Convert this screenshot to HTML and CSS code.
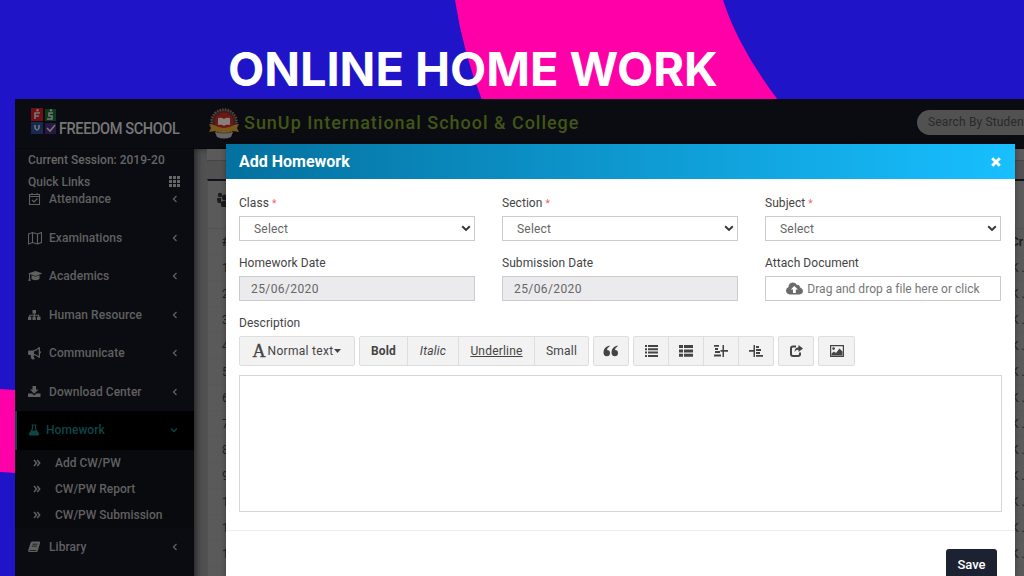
FILE: index.html
```html
<!DOCTYPE html>
<html lang="en">
<head>
<meta charset="utf-8">
<title>Online Home Work</title>
<link rel="stylesheet" href="styles.css">
</head>
<body>
<svg class="backdrop" viewBox="0 0 1024 576"><path fill="#ff00a8" d="M455 0Q463 52 482 100H778C751 64 733 31 723 0ZM0 389l16 1v83l-16-1z"/></svg>
<h1 class="title">ONLINE HOME WORK</h1>
<div class="window">
  <header class="topbar">
    <div class="brand">
      <svg class="brand-mark" viewBox="0 0 26 27"><path fill="#701015" d="M0 0h12v13H0z"/><path fill="#0c3a1b" d="M14 1h11v12H14z"/><path fill="#172b50" d="M0 14h12v12H0z"/><path fill="#2a1744" d="M14 15h11v11H14z"/><g fill="none" stroke="#777" stroke-width="1.6"><path d="M4 11V5h5M4 8h4M22 5h-4v3h3v3h-5M4 17v3q2 4 4 0v-3M16 20l3 3 5-6"/></g><circle cx="6.500" cy="2.300" r="1.200" fill="#777"/><circle cx="20" cy="2.300" r="1.200" fill="#777"/></svg>
      <span class="brand-name">FREEDOM SCHOOL</span>
    </div>
    <svg class="crest" viewBox="0 0 32 32"><circle cx="16" cy="14" r="12.500" fill="#2d2323" stroke="#63413f" stroke-width="2.500" stroke-dasharray="1.500 1.200"/><circle cx="16" cy="14" r="9.500" fill="#701716"/><path fill="#858078" d="M10 10q4-1 6 1 2-2 6-1v7q-4-1-6 1-2-2-6-1z"/><path fill="#79591b" d="M1 16l5 1q10 6 20 0l5-1-2 4 2 4-6-1q-9 4-18 0l-6 1 2-4z"/><path fill="#676767" d="M7 24q9 3 18 0l-2 5q-7 3-14 0z"/></svg>
    <span class="school">SunUp International School &amp; College</span>
    <div class="search">Search By Student</div>
  </header>
  <div class="main">
    <nav class="sidebar">
      <div class="session">Current Session: 2019-20</div>
      <div class="quick"><span>Quick Links</span><svg width="11" height="11" viewBox="0 0 11 11"><path fill="#666" d="M0 0h3v3H0zM4 0h3v3H4zM8 0h3v3H8zM0 4h3v3H0zM4 4h3v3H4zM8 4h3v3H8zM0 8h3v3H0zM4 8h3v3H4zM8 8h3v3H8z"/></svg></div>
      <div class="menu">
        <div class="item"><svg class="ico" viewBox="0 0 14 14"><path class="ln" d="M1.500 2.500h10v10h-10zM1.500 4.500h10M4 1v2M9 1v2M4 8l2 2 3.500-3.500"/></svg><span>Attendance</span><svg class="arr" viewBox="0 0 6 8"><path d="M4.500 1L1.500 4l3 3"/></svg></div>
        <div class="item"><svg class="ico" viewBox="0 0 14 14"><path class="ln" d="M.5 3l4-1.500 5 1.500 4-1.500v10L9.500 13l-5-1.500-4 1.500zM4.500 1.500v10M9.500 3v10"/></svg><span>Examinations</span><svg class="arr" viewBox="0 0 6 8"><path d="M4.500 1L1.500 4l3 3"/></svg></div>
        <div class="item"><svg class="ico" viewBox="0 0 14 14"><path d="M7.500 2l7.500 2.500L7.500 7 0 4.500zM3.500 6.300l4 1.300 4-1.300V10q-4 2.500-8 0zM1 5h1v4l.7 3H.3L1 9z"/></svg><span>Academics</span><svg class="arr" viewBox="0 0 6 8"><path d="M4.500 1L1.500 4l3 3"/></svg></div>
        <div class="item"><svg class="ico" viewBox="0 0 14 14"><path d="M4.500 2h3.500v3.500H6.800v1.200h4.400v2H12.500V12H9V8.700h1V7.800H6.800v.9h1V12H4.500V8.700h1.200v-.9H2.300v.9h1V12H0V8.700h1.200v-2h4.500V5.500H4.500z"/></svg><span>Human Resource</span><svg class="arr" viewBox="0 0 6 8"><path d="M4.500 1L1.500 4l3 3"/></svg></div>
        <div class="item"><svg class="ico" viewBox="0 0 14 14"><path fill-rule="evenodd" d="M11 1q1 0 1 1v3q1 .2 1 1.200T12 7.500V11q0 1-1 1-2.500-2.500-5-2.800-1 .8 0 2-.2.8 1 1.500-1.500 1.200-3.500.3Q2.500 10.500 2.800 9H1.500Q0 9 0 8V5.500q0-1 1.500-1H5Q8.500 4 11 1zm-.3 1.800Q8.500 5 6 5.400v2.500q2.500.4 4.700 2.300z"/></svg><span>Communicate</span><svg class="arr" viewBox="0 0 6 8"><path d="M4.500 1L1.500 4l3 3"/></svg></div>
        <div class="item"><svg class="ico" viewBox="0 0 14 14"><path d="M4.500 1h3.500v3.500h2.500L6.200 8.800 2 4.500h2.500zM0 8.500h4l2.200 2 2.300-2h4V12H0z"/></svg><span>Download Center</span><svg class="arr" viewBox="0 0 6 8"><path d="M4.500 1L1.500 4l3 3"/></svg></div>
        <div class="item active"><svg class="ico" viewBox="0 0 14 14"><path fill-rule="evenodd" d="M3.500 1.500h5v1H8v3l3 5q.8 2-1 2H2q-1.800 0-1-2l3-5v-3h-.5zM5 2.500v3.200L4 7.500h4L7 5.700V2.500z"/></svg><span>Homework</span><svg class="arr down" viewBox="0 0 8 6"><path d="M1 1.500l3 3 3-3"/></svg></div>
        <div class="sub"><svg viewBox="0 0 8 8"><path d="M1 1l2.500 3L1 7M4.200 1l2.500 3-2.500 3"/></svg><span>Add CW/PW</span></div>
        <div class="sub"><svg viewBox="0 0 8 8"><path d="M1 1l2.500 3L1 7M4.200 1l2.500 3-2.500 3"/></svg><span>CW/PW Report</span></div>
        <div class="sub"><svg viewBox="0 0 8 8"><path d="M1 1l2.500 3L1 7M4.200 1l2.500 3-2.500 3"/></svg><span>CW/PW Submission</span></div>
        <div class="item"><svg class="ico" viewBox="0 0 14 14"><path fill-rule="evenodd" d="M4 1.500h7.500l.7 1-2.400 8.300q-.3 1.200-1.500 1.200H1.500Q-.3 12 .3 10L2.500 3Q3 1.500 4 1.500zm.6 2.200l-.2.700h5l.2-.7zM4 5.700l-.2.700h5l.2-.7zM1.700 9.900q-.3.800.3.800h6l.3-.8z"/></svg><span>Library</span><svg class="arr" viewBox="0 0 6 8"><path d="M4.500 1L1.500 4l3 3"/></svg></div>
      </div>
    </nav>
    <section class="content">
      <div class="strip"></div>
      <div class="panel">
        <div class="panel-head"><svg width="18" height="18" viewBox="0 0 18 18"><circle cx="3" cy="4" r="2.200"/><circle cx="8" cy="6.500" r="3"/><circle cx="14" cy="4" r="2.200"/><path d="M0 7h4v5H1q-1-2-1-5zM3.500 11q4.500-2 9 0v5h-8zM13 7h4v5h-3z"/></svg></div>
        <div class="row head"><span>#</span><span>Cr</span></div>
        <div class="row"><span>1</span><span>K .</span></div>
        <div class="row"><span>2</span><span>K .</span></div>
        <div class="row"><span>3</span><span>K .</span></div>
        <div class="row"><span>4</span><span>K .</span></div>
        <div class="row"><span>5</span><span>K .</span></div>
        <div class="row"><span>6</span><span>K .</span></div>
        <div class="row"><span>7</span><span>K .</span></div>
        <div class="row"><span>8</span><span>K .</span></div>
        <div class="row"><span>9</span><span>K .</span></div>
        <div class="row"><span>1</span><span>K .</span></div>
        <div class="row"><span>1</span><span>K .</span></div>
        <div class="row"><span>1</span><span>K .</span></div>
      </div>
    </section>
  </div>
</div>
<div class="modal">
  <div class="modal-head"><span>Add Homework</span><svg width="10" height="10" viewBox="0 0 10 10"><path d="M1.200 1.200l7.600 7.600M8.800 1.200L1.200 8.800" stroke="#fff" stroke-width="2.900"/></svg></div>
  <div class="form">
    <div class="field"><label>Class <i>*</i></label><div class="box select"><span>Select</span><svg width="10" height="7" viewBox="0 0 10 7"><path d="M1.200 1.300L5 5l3.800-3.700"/></svg></div></div>
    <div class="field"><label>Section <i>*</i></label><div class="box select"><span>Select</span><svg width="10" height="7" viewBox="0 0 10 7"><path d="M1.200 1.300L5 5l3.800-3.700"/></svg></div></div>
    <div class="field"><label>Subject <i>*</i></label><div class="box select"><span>Select</span><svg width="10" height="7" viewBox="0 0 10 7"><path d="M1.200 1.300L5 5l3.800-3.700"/></svg></div></div>
    <div class="field"><label>Homework Date</label><div class="box date">25/06/2020</div></div>
    <div class="field"><label>Submission Date</label><div class="box date">25/06/2020</div></div>
    <div class="field"><label>Attach Document</label><div class="box drop"><svg width="17" height="13" viewBox="0 0 17 13"><path fill="#6b6b6b" fill-rule="evenodd" d="M4 12.500Q0 12 0 8.500 0 6 2.500 5 2.500 1 6.500.5 10 .3 11 3q2.500-.8 3.200 2.500Q17 6.500 17 9t-3.500 3.500zM8.300 4L4.800 7.500H7V11h2.800V7.500H12z"/></svg><span>Drag and drop a file here or click</span></div></div>
  </div>
  <div class="desc-label">Description</div>
  <div class="toolbar">
    <div class="group"><div class="btn normal"><b>A</b><span>Normal text</span><svg width="7" height="4" viewBox="0 0 7 4"><path fill="#444" d="M0 0h7L3.500 4z"/></svg></div></div>
    <div class="group"><div class="btn bold">Bold</div><div class="btn italic">Italic</div><div class="btn under">Underline</div><div class="btn small">Small</div></div>
    <div class="group"><div class="btn icon"><svg width="16" height="12" viewBox="0 0 16 12"><path d="M6.500.5v1Q4 2.500 4 5q3 0 3 3 0 3.200-3.300 3.200Q.5 11.200.5 7.500.5 2 6.500.5zM14.500.5v1Q12 2.500 12 5q3 0 3 3 0 3.200-3.300 3.200-3.200 0-3.200-3.700Q8.500 2 14.500.5z"/></svg></div></div>
    <div class="group"><div class="btn icon"><svg width="14" height="12" viewBox="0 0 14 12"><path d="M1 0h2v2H1zM4 0h10v2H4zM1 3.300h2v2H1zM4 3.300h10v2H4zM1 6.600h2v2H1zM4 6.600h10v2H4zM1 9.900h2v2H1zM4 9.900h10v2H4z"/></svg></div><div class="btn icon"><svg width="14" height="12" viewBox="0 0 14 12"><path d="M0 0h4v3H0zM5 0h9v3H5zM0 4.400h4v3H0zM5 4.400h9v3H5zM0 8.800h4v3H0zM5 8.800h9v3H5z"/></svg></div><div class="btn icon"><svg width="14" height="12" viewBox="0 0 14 12"><path d="M0 0h5v1.800H0zM1 3h3v2H1zM1 6h5v2H1zM0 9.500h7v2H0zM8.500 0H10v12H8.500zM6.500 5h2v1.700h-2zM10 5h4v1.700h-4z"/></svg></div><div class="btn icon"><svg width="14" height="12" viewBox="0 0 14 12"><path d="M4.500 0H6v12H4.500zM0 5h4.500v1.700H0zM7 1h3v1.900H7zM7 4h5v1.900H7zM7 7h4v1.900H7zM7 10h7v1.800H7z"/></svg></div></div>
    <div class="group"><div class="btn icon"><svg width="13" height="12" viewBox="0 0 13 12"><path fill="none" stroke="#444" stroke-width="2" d="M6 1.500H3Q1 1.500 1 3.500V9q0 2 2 2h5q2 0 2-2V7.500"/><path d="M8.500 0L13 3.500 8.500 7V4.800Q6 4.500 4.500 7 4.800 2.500 8.500 2.200z"/></svg></div></div>
    <div class="group"><div class="btn icon last"><svg width="14" height="12" viewBox="0 0 14 12"><path fill="none" stroke="#444" stroke-width="1.200" d="M.6.6h12.800v10.800H.6z"/><circle cx="3.600" cy="3.600" r="1.300"/><path d="M1.500 10.500V8.500L4 6.500l2 1.500 3.500-4.500 3 3v4z"/></svg></div></div>
  </div>
  <div class="textarea"></div>
  <div class="modal-foot"><div class="save">Save</div></div>
</div>
</body>
</html>
```
FILE: styles.css
```css
* { box-sizing: border-box; }
body { margin: 0; width: 1024px; height: 576px; overflow: hidden; position: relative; background: #1f14c8; font-family: Roboto, "Liberation Sans", sans-serif; font-size: 12px; letter-spacing: 0; color: #444; }
svg { display: block; flex: none; }
.backdrop { position: absolute; inset: 0; width: 1024px; height: 576px; }
.title { position: relative; margin: 0; height: 99px; padding: 39px 0 0 228px; font: 700 47px/60px Inter, sans-serif; letter-spacing: -.05px; color: #fff; white-space: nowrap; }
.window { position: relative; margin-left: 15px; height: 477px; display: flex; flex-direction: column; overflow: hidden; background: #0b0c11; }
.topbar { flex: none; height: 50px; display: flex; align-items: center; background: #0b0c11; border-bottom: 1px solid #07080b; }
.brand { display: flex; width: 193px; padding-left: 16px; align-items: flex-start; }
.brand-mark { width: 26px; height: 27px; }
.brand-name { font-size: 16px; line-height: 20px; padding-top: 11px; margin-left: 2px; color: #777; font-weight: 500; white-space: nowrap; transform: scaleX(.91); transform-origin: 0 0; letter-spacing: -.45px; }
.crest { width: 32px; height: 32px; }
.school { margin-left: 4px; flex: 1; font-size: 18px; font-weight: 500; letter-spacing: .98px; color: #425518; white-space: nowrap; position: relative; top: -1px; }
.search { flex: none; width: 130px; height: 25px; margin: -3px -23px 0 0; padding-left: 11px; border-radius: 13px; background: #515151; color: #292929; line-height: 25px; white-space: nowrap; letter-spacing: .15px; }
.main { flex: 1; display: flex; min-height: 0; }
.sidebar { flex: none; width: 179px; background: #0b0c11; color: #606060; font-weight: 500; }
.session { height: 22px; line-height: 22px; padding-left: 13px; color: #666; white-space: nowrap; }
.quick { height: 21px; padding: 0 14px 0 13px; display: flex; justify-content: space-between; align-items: center; color: #626262; }
.menu { margin-top: -12px; }
.item { height: 38.5px; display: flex; align-items: center; padding: 0 16px 0 13px; }
.item span { flex: 1; margin-left: 7px; white-space: nowrap; letter-spacing: .05px; }
.ico { width: 14px; height: 14px; fill: #606060; }
.ln { fill: none; stroke: #606060; stroke-width: 1.1; }
.arr { width: 6px; height: 8px; }
.arr path { fill: none; stroke: #606060; stroke-width: 1.3; }
.active { background: #000; color: #0f4547; border-left: 2px solid #0e4648; padding-left: 11px; }
.active span { margin-left: 4px; }
.active .ico { fill: #0f4547; }
.active .down { width: 8px; height: 6px; }
.active .arr path { stroke: #0f4547; }
.sub { height: 26px; display: flex; align-items: center; padding-left: 18px; background: #090a0e; }
.sub svg { width: 8px; height: 8px; fill: none; stroke: #606060; stroke-width: 1.5; }
.sub span { margin-left: 14px; }
.content { flex: 1; min-width: 0; padding-left: 13px; background: #515151; box-shadow: inset 6px 3px 7px -4px #222; }
.strip { height: 12px; background: #5a5a5a; border-bottom: 1px solid #444; }
.panel { margin-top: 18px; height: 420px; background: #5a5a5a; border-top: 2px solid #111318; border-left: 1px solid #515151; }
.panel-head { height: 48px; padding: 10px 0 0 9px; border-bottom: 1px solid #515151; }
.panel-head svg { fill: #1b1b1b; }
.row { height: 26px; line-height: 26px; display: flex; padding-left: 14px; color: #222; border-bottom: 1px solid #585858; }
.row span:first-child { width: 789px; flex: none; }
.row span:last-child { white-space: nowrap; }
.head { font-weight: 700; }
.modal { position: absolute; left: 226px; top: 144px; width: 789px; height: 432px; background: #fff; overflow: hidden; box-shadow: 0 1px 5px rgba(0,0,0,.35); }
.modal-head { height: 35px; padding: 0 14px 0 13px; display: flex; justify-content: space-between; align-items: center; background: linear-gradient(90deg, #04719f, #18bfff); color: #fff; font-size: 16px; font-weight: 700; letter-spacing: 0; }
.form { padding: 14px 14px 0 13px; display: grid; grid-template-columns: repeat(3, 236px); column-gap: 27px; grid-auto-rows: 60px; }
.form label, .desc-label { display: block; height: 20px; line-height: 20px; margin-bottom: 3px; white-space: nowrap; letter-spacing: .05px; color: #444; }
label i { color: #f06060; font-style: normal; font-size: 10px; }
.box { height: 25px; border: 1px solid #ccc; display: flex; align-items: center; color: #666; white-space: nowrap; }
.select { padding: 0 3px 0 14px; justify-content: space-between; letter-spacing: .2px; }
.select path { fill: none; stroke: #333; stroke-width: 1.9; }
.date { padding-left: 11px; background: #ebebed; letter-spacing: .4px; }
.drop { justify-content: center; gap: 4px; color: #777; letter-spacing: .02px; }
.desc-label { margin: 0 0 3px 13px; }
.toolbar { margin-left: 13px; display: flex; gap: 4px; }
.group { display: flex; height: 30px; border: 1px solid #ddd; border-radius: 2px; background: #f2f2f2; }
.btn { display: flex; align-items: center; justify-content: center; letter-spacing: .2px; }
.btn + .btn { border-left: 1px solid #ddd; }
.btn svg { fill: #444; }
.normal { width: 114px; letter-spacing: .3px; }
.normal b { font: 400 18px/20px "Liberation Serif", serif; -webkit-text-stroke: .4px #444; margin-right: 2px; letter-spacing: 0; }
.normal svg { margin-left: 1px; }
.bold { width: 47px; font-weight: 700; }
.italic { width: 51px; font-style: italic; }
.under { width: 76px; text-decoration: underline; }
.small { width: 54px; }
.icon { width: 34px; }
.group .icon + .icon { width: 35px; }
.group .last { width: 35px; }
.textarea { margin: 9px 13px 0; height: 137px; border: 1px solid #d6d6d6; }
.modal-foot { margin-top: 18px; border-top: 1px solid #eee; padding: 18px 18px 0 0; display: flex; justify-content: flex-end; }
.save { width: 51px; height: 34px; border-radius: 3px; background: #1d2233; color: #fff; font-size: 13px; font-weight: 500; line-height: 31px; text-align: center; }
```
